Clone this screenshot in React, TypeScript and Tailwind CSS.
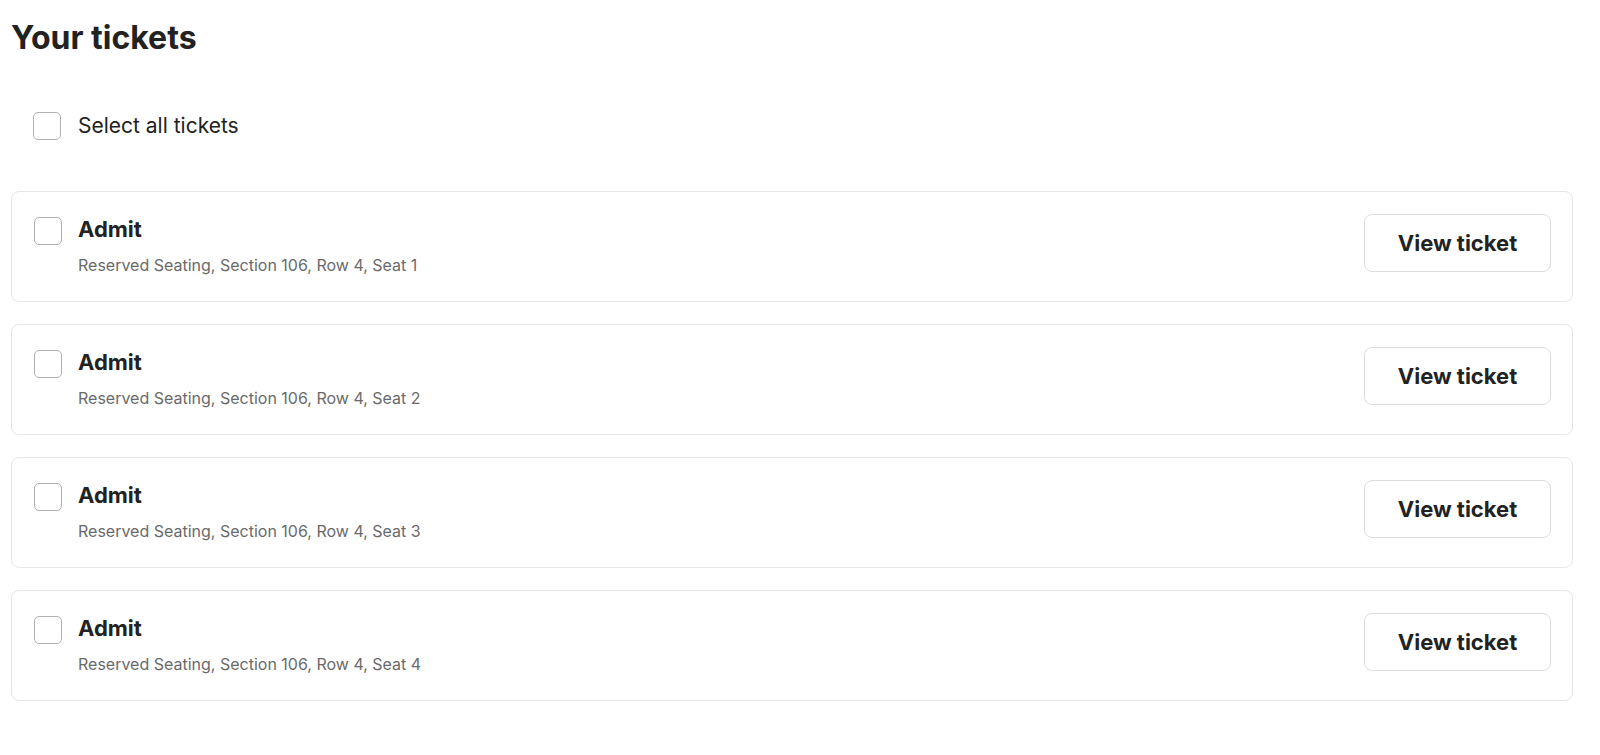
const tickets = [1, 2, 3, 4];

const Checkbox = () => (
  <span className="block h-[28px] w-[28px] shrink-0 rounded-[5px] border border-[#b0b0b0] bg-white" />
);

const TicketRow = ({ seat }: { seat: number }) => (
  <div className="flex h-[111px] items-start justify-between rounded-[8px] border border-[#e6e6e6] bg-white pl-[22px] pr-[21px] pt-[22px]">
    <div className="flex items-start gap-[16px]">
      <div className="mt-[3px]">
        <Checkbox />
      </div>
      <div className="mt-[1px]">
        <div className="text-[22px] font-bold leading-[28px] text-[#222222]">Admit</div>
        <div className="mt-[12px] text-[16px] leading-[20px] text-[#6a6a6a]">
          Reserved Seating, Section 106, Row 4, Seat {seat}
        </div>
      </div>
    </div>
    <button className="h-[58px] w-[187px] rounded-[8px] border border-[#dddddd] bg-white text-[22px] font-bold text-[#222222]">
      View ticket
    </button>
  </div>
);

export default function App() {
  return (
    <div className="min-h-screen bg-white px-[11px] font-['Inter',sans-serif] text-[#222222]">
      <h1 className="pt-[18px] text-[32px] font-bold leading-[40px]">Your tickets</h1>
      <label className="mt-[54px] flex items-center gap-[17px] pl-[22px]">
        <Checkbox />
        <span className="text-[21px] leading-[28px]">Select all tickets</span>
      </label>
      <div className="mt-[51px] flex w-[1562px] flex-col gap-[22px]">
        {tickets.map((s) => (
          <TicketRow key={s} seat={s} />
        ))}
      </div>
    </div>
  );
}
